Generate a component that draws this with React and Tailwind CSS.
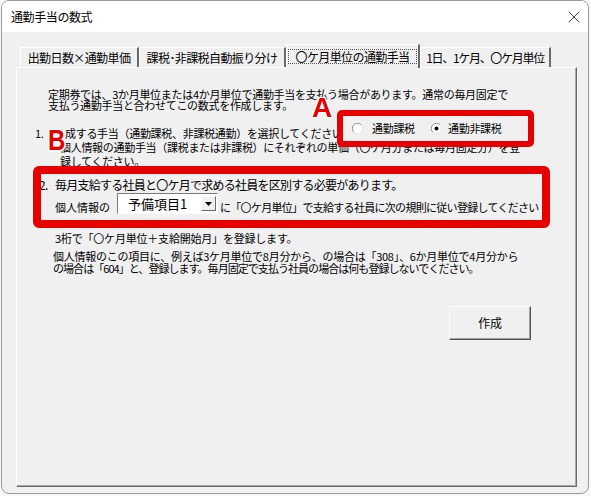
import React from "react";
import { X } from "lucide-react";

function Radio({ checked }) {
  return (
    <svg width="11" height="11" viewBox="0 0 11 11" className="shrink-0">
      <circle cx="5.5" cy="5.5" r="5" fill="#fff" />
      <path d="M1.8 9.2 A5 5 0 0 1 9.2 1.8" fill="none" stroke="#8a8a8a" strokeWidth="1" />
      <path d="M9.2 1.8 A5 5 0 0 1 1.8 9.2" fill="none" stroke="#e3e3e3" strokeWidth="1" />
      {checked && <circle cx="5.5" cy="5.5" r="2" fill="#000" />}
    </svg>
  );
}

function Tab({ w, selected, children }) {
  if (selected) {
    return (
      <div
        className="relative z-10 -mb-px flex h-[24px] shrink-0 items-start border-t border-l border-white border-r-2 border-r-[#6a6a6a] bg-[#f0f0f0] pt-[4px] pl-[1px] pr-[1px]"
        style={{ width: w }}
      >
        <div className="flex h-[15px] flex-1 items-center justify-center border border-dotted border-[#555] leading-none">
          {children}
        </div>
      </div>
    );
  }
  return (
    <div
      className="flex h-[20px] shrink-0 items-center justify-center overflow-hidden border-t border-l border-white border-r-2 border-r-[#6a6a6a] leading-none"
      style={{ width: w }}
    >
      {children}
    </div>
  );
}

export default function App() {
  return (
    <div className="h-[496px] w-[591px] overflow-hidden bg-[#f7f7f7] font-['Noto_Sans_CJK_JP','Liberation_Sans',sans-serif] text-black">
      <div className="ml-[1px] flex h-[494px] w-[588px] flex-col overflow-hidden rounded-[8px] border border-[#9a9a9a] bg-[#f0f0f0]">
        {/* title bar */}
        <div className="flex h-[31px] shrink-0 items-center justify-between bg-white pl-[9px] pr-[4px]">
          <span className="text-[12px] tracking-[-0.4px]">通勤手当の数式</span>
          <X size={20} strokeWidth={1.1} className="text-[#333]" />
        </div>

        <div className="flex flex-1 flex-col pl-[14px] pr-[11px] pt-[11px] pb-[6px]">
          {/* tabs */}
          <div className="ml-[4px] flex h-[24px] items-end text-[12px] tracking-[-0.6px]">
            <Tab w={119}>出勤日数×通勤単価</Tab>
            <Tab w={147}>課税･非課税自動振り分け</Tab>
            <Tab w={134} selected>〇ケ月単位の通勤手当</Tab>
            <Tab w={131}>
              <span className="tracking-[-1.3px]">1日、1ケ月、〇ケ月単位</span>
            </Tab>
          </div>

          {/* panel */}
          <div className="relative flex flex-1 flex-col border border-white border-r-[#6a6a6a] border-b-[#6a6a6a] pl-[18px] pt-[21px] text-[11px] tracking-[-0.3px] shadow-[inset_-1px_-1px_0_#a8a8a8] whitespace-nowrap">
            <div className="ml-[13px] leading-[11px]">
              <div>定期券では、3か月単位または4か月単位で通勤手当を支払う場合があります。通常の毎月固定で</div>
              <div>支払う通勤手当と合わせてこの数式を作成します。</div>
            </div>

            <div className="mt-[15px] leading-[14px]">
              <div className="flex">
                <span className="w-[30px]">1.</span>
                <span>成する手当（通勤課税、非課税通勤）を選択してください。</span>
              </div>
              <div className="pl-[25px]">個人情報の通勤手当（課税または非課税）にそれぞれの単価（〇ケ月分または毎月固定分）を登</div>
              <div className="pl-[25px]">録してください。</div>
            </div>

            <div className="mt-[10px] flex text-[12px] leading-[14px] tracking-[-0.75px]">
              <span className="w-[20px] pl-[4px]">2.</span>
              <span>毎月支給する社員と〇ケ月で求める社員を区別する必要があります。</span>
            </div>

            <div className="mt-px flex h-[21px] items-end pl-[20px] leading-[14px]">
              <span className="tracking-normal">個人情報の</span>
              <div className="ml-[7px] flex h-[21px] w-[101px] self-start border border-[#7a7a7a] border-r-white border-b-white bg-white">
                <span className="flex-1 pl-[10px] text-[13px] leading-[19px] tracking-normal">予備項目1</span>
                <span className="my-[2px] mr-px flex w-[15px] items-center justify-center border border-white border-r-[#6a6a6a] border-b-[#6a6a6a] bg-[#f0f0f0]">
                  <svg width="7" height="4" viewBox="0 0 7 4">
                    <path d="M0 0 H7 L3.5 4 Z" fill="#000" />
                  </svg>
                </span>
              </div>
              <span className="ml-[2px] tracking-[-0.7px]">に「〇ケ月単位」で支給する社員に次の規則に従い登録してください</span>
            </div>

            <div className="mt-[17px] pl-[20px] leading-[14px] tracking-[-0.2px]">
              3桁で「〇ケ月単位＋支給開始月」を登録します。
            </div>

            <div className="mt-[5px] pl-[18px] leading-[12px] tracking-[-0.25px]">
              <div>個人情報のこの項目に、例えば3ケ月単位で8月分から、の場合は「308」、6か月単位で4月分から</div>
              <div className="tracking-[-0.95px]">の場合は「604」と、登録します。毎月固定で支払う社員の場合は何も登録しないでください。</div>
            </div>

            <div className="mt-[32px] flex justify-end pr-[45px]">
              <button className="flex h-[34px] w-[82px] items-center justify-center border border-white border-r-[#555] border-b-[#555] bg-[#f0f0f0] text-[12px] shadow-[inset_-1px_-1px_0_#a0a0a0]">
                作成
              </button>
            </div>

            {/* annotation A */}
            <div className="absolute left-[320px] top-[42px] flex h-[37px] w-[197px] items-center rounded-[5px] border-[6px] border-[#e60000] bg-[#f0f0f0] pl-[9px] tracking-[-0.3px]">
              <div className="flex w-[79px] items-center gap-[9px]">
                <Radio />
                <span>通勤課税</span>
              </div>
              <div className="flex items-center gap-[6px]">
                <Radio checked />
                <span>通勤非課税</span>
              </div>
            </div>
            <span className="absolute left-[295px] top-[26px] font-['Liberation_Sans',sans-serif] text-[28px] font-bold leading-none tracking-normal text-[#e60000] [text-shadow:1.5px_0_#fff,-1.5px_0_#fff,0_1.5px_#fff,0_-1.5px_#fff,1px_1px_#fff,-1px_-1px_#fff,1px_-1px_#fff,-1px_1px_#fff]">
              A
            </span>

            {/* annotation B */}
            <div className="pointer-events-none absolute left-[16px] top-[98px] h-[62px] w-[517px] rounded-[6px] border-[8px] border-[#e60000]" />
            <span className="absolute left-[31px] top-[57px] origin-left scale-x-[0.8] font-['Liberation_Sans',sans-serif] text-[30px] font-bold leading-none tracking-normal text-[#e60000] [text-shadow:1.5px_0_#fff,-1.5px_0_#fff,0_1.5px_#fff,0_-1.5px_#fff,1px_1px_#fff,-1px_-1px_#fff,1px_-1px_#fff,-1px_1px_#fff]">
              B
            </span>
          </div>
        </div>
      </div>
    </div>
  );
}
